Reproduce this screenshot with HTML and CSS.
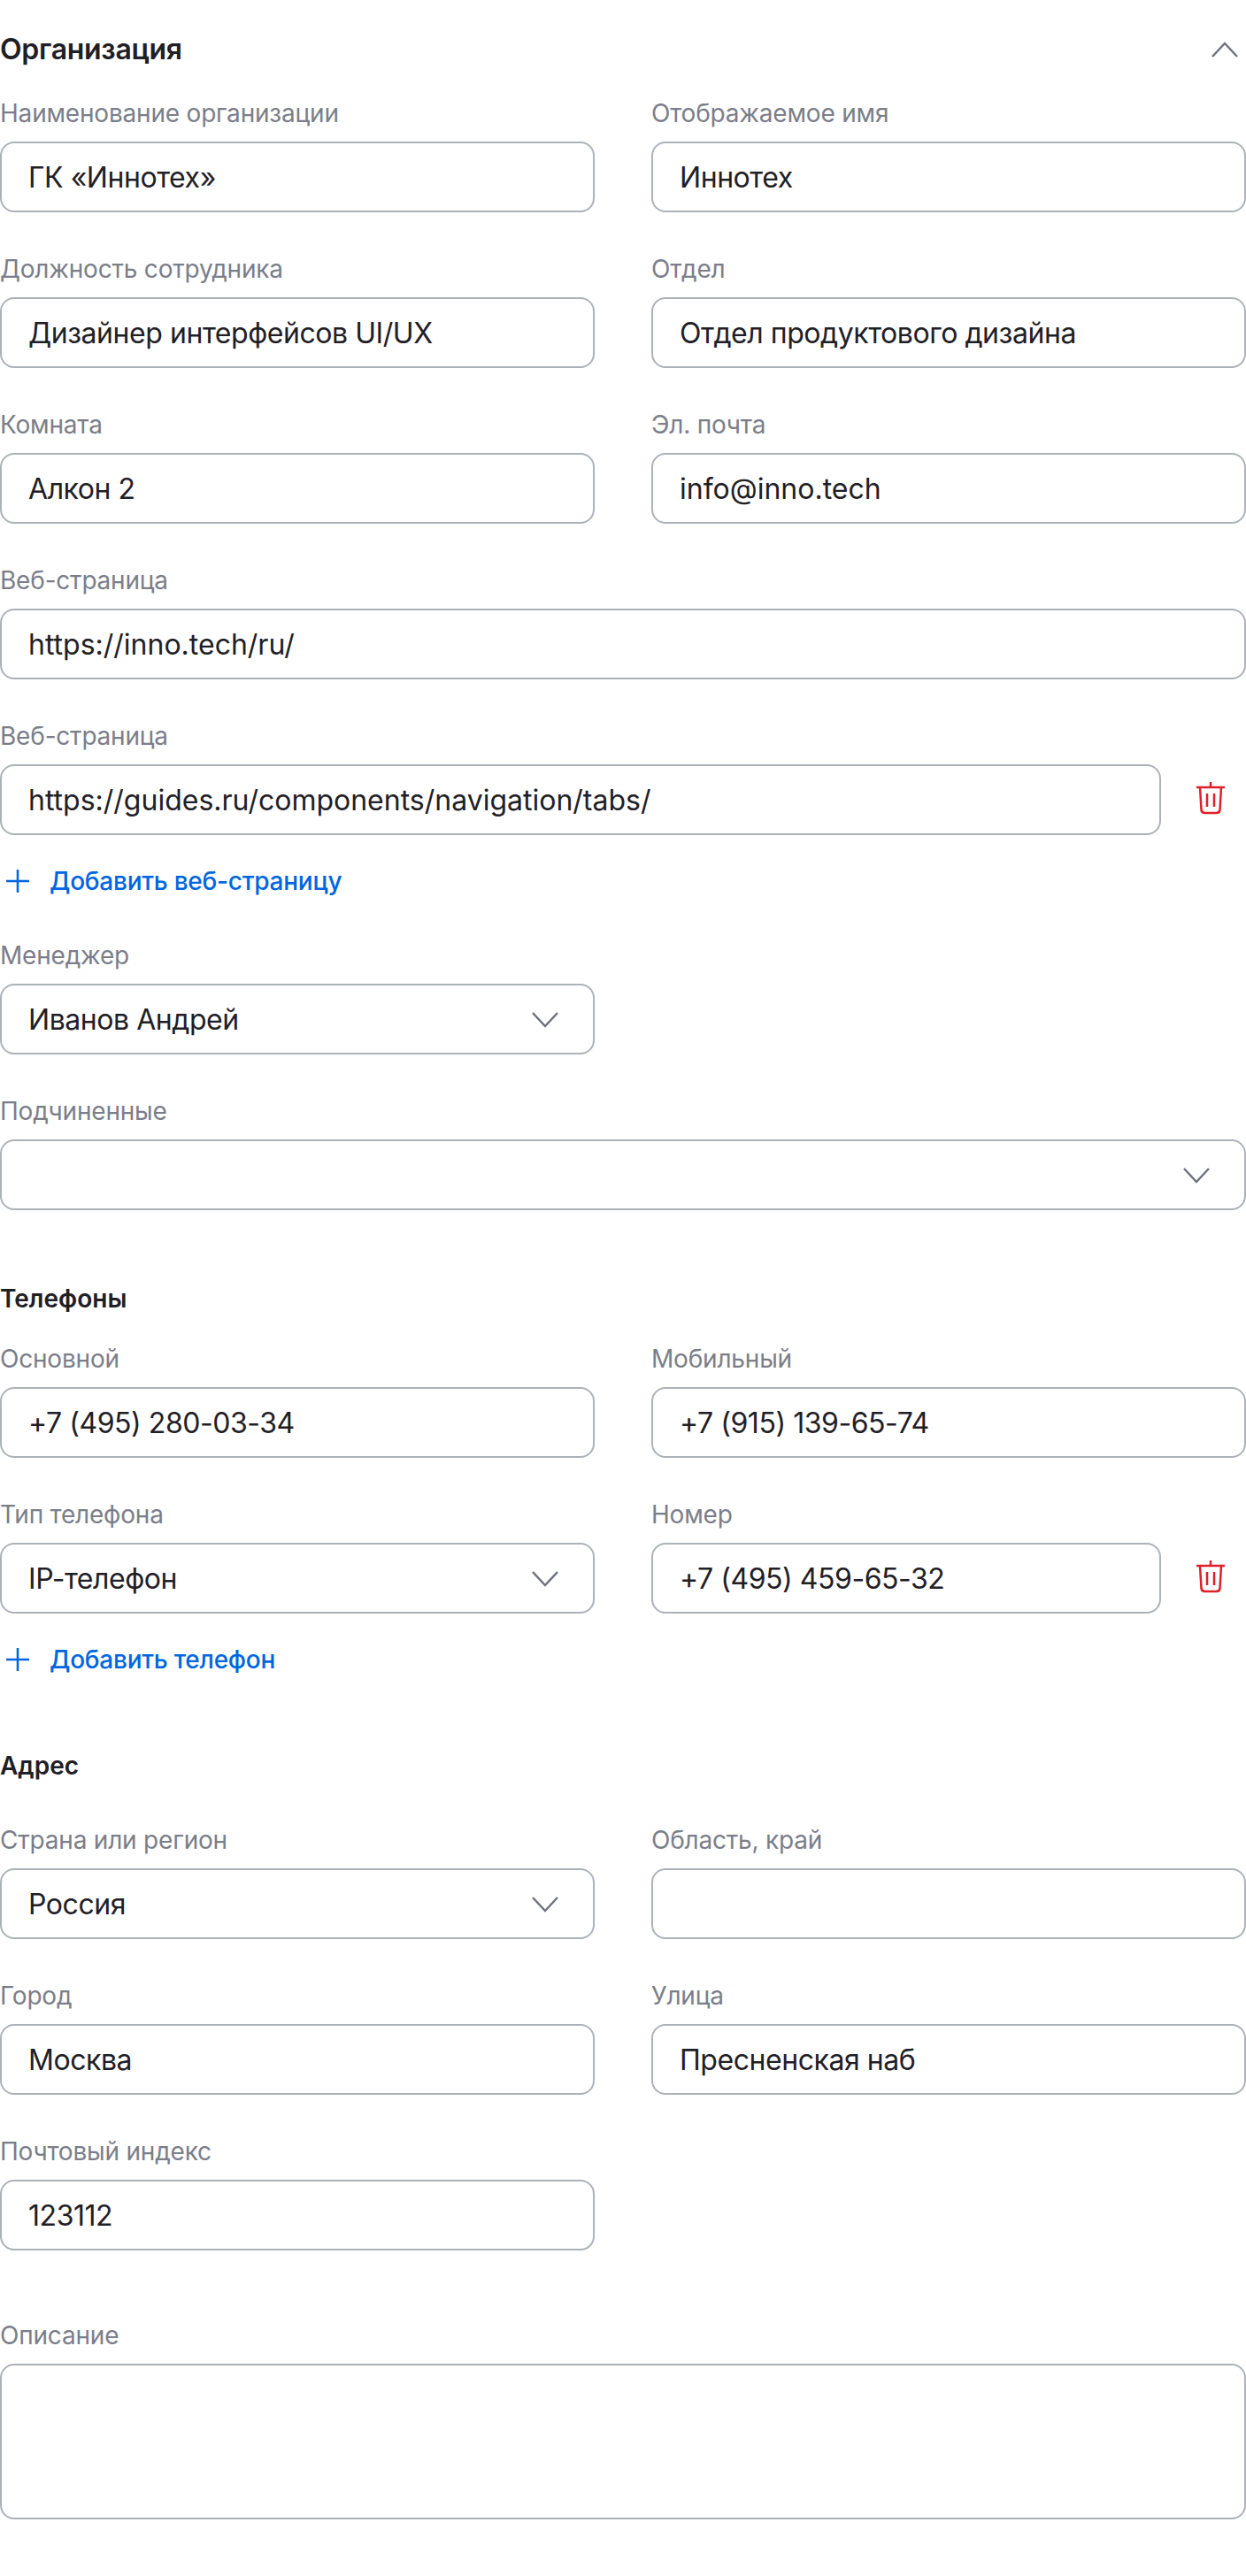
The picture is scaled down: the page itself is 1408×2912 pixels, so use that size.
FILE: index.html
```html
<!DOCTYPE html>
<html lang="ru">
<head>
  <meta charset="UTF-8" />
  <title>Организация</title>
  <link rel="stylesheet" href="styles.css">
</head>
<body>

  <div class="section-head">
    <h2>Организация</h2>
    <svg class="icon-toggle" viewBox="0 0 40 40"><path d="M6 28 20 13l14 15"/></svg>
  </div>

  <!-- Организация -->
  <div class="grid">
    <div class="field"><div class="label">Наименование организации</div><div class="box">ГК «Иннотех»</div></div>
    <div class="field"><div class="label">Отображаемое имя</div><div class="box">Иннотех</div></div>
    <div class="field"><div class="label">Должность сотрудника</div><div class="box">Дизайнер интерфейсов UI/UX</div></div>
    <div class="field"><div class="label">Отдел</div><div class="box">Отдел продуктового дизайна</div></div>
    <div class="field"><div class="label">Комната</div><div class="box">Алкон 2</div></div>
    <div class="field"><div class="label">Эл. почта</div><div class="box latin">info@inno.tech</div></div>
    <div class="field wide"><div class="label">Веб-страница</div><div class="box latin">https://inno.tech/ru/</div></div>
    <div class="field wide">
      <div class="label">Веб-страница</div>
      <div class="with-delete">
        <div class="box latin">https://guides.ru/components/navigation/tabs/</div>
        <div class="delete"><svg class="icon-trash" viewBox="0 0 40 40"><path d="M20 0v6M4 6h32M8 6l1.5 25.5a4 4 0 0 0 4 3.5h13a4 4 0 0 0 4-3.5L32 6M16 13v15M24 13v15"/></svg></div>
      </div>
    </div>
  </div>

  <div class="add-link">
    <svg class="icon-plus" viewBox="0 0 40 40"><path d="M20 7v26M7 20h26"/></svg>
    Добавить веб-страницу
  </div>

  <div class="grid">
    <div class="field">
      <div class="label">Менеджер</div>
      <div class="box select">Иванов Андрей<svg class="icon-chevron" viewBox="0 0 40 40"><path d="M6 13l14 15 14-15"/></svg></div>
    </div>
    <div class="field"></div>
    <div class="field wide">
      <div class="label">Подчиненные</div>
      <div class="box select"><svg class="icon-chevron" viewBox="0 0 40 40"><path d="M6 13l14 15 14-15"/></svg></div>
    </div>
  </div>

  <!-- Телефоны -->
  <h3 class="phones-title">Телефоны</h3>
  <div class="grid">
    <div class="field"><div class="label">Основной</div><div class="box">+7 (495) 280-03-34</div></div>
    <div class="field"><div class="label">Мобильный</div><div class="box">+7 (915) 139-65-74</div></div>
    <div class="field">
      <div class="label">Тип телефона</div>
      <div class="box select">IP-телефон<svg class="icon-chevron" viewBox="0 0 40 40"><path d="M6 13l14 15 14-15"/></svg></div>
    </div>
    <div class="field">
      <div class="label">Номер</div>
      <div class="with-delete">
        <div class="box">+7 (495) 459-65-32</div>
        <div class="delete"><svg class="icon-trash" viewBox="0 0 40 40"><path d="M20 0v6M4 6h32M8 6l1.5 25.5a4 4 0 0 0 4 3.5h13a4 4 0 0 0 4-3.5L32 6M16 13v15M24 13v15"/></svg></div>
      </div>
    </div>
  </div>

  <div class="add-link">
    <svg class="icon-plus" viewBox="0 0 40 40"><path d="M20 7v26M7 20h26"/></svg>
    Добавить телефон
  </div>

  <!-- Адрес -->
  <h3 class="address-title">Адрес</h3>
  <div class="grid">
    <div class="field">
      <div class="label">Страна или регион</div>
      <div class="box select">Россия<svg class="icon-chevron" viewBox="0 0 40 40"><path d="M6 13l14 15 14-15"/></svg></div>
    </div>
    <div class="field"><div class="label">Область, край</div><div class="box"></div></div>
    <div class="field"><div class="label">Город</div><div class="box">Москва</div></div>
    <div class="field"><div class="label">Улица</div><div class="box">Пресненская наб</div></div>
    <div class="field"><div class="label">Почтовый индекс</div><div class="box">123112</div></div>
  </div>

  <div class="field description">
    <div class="label">Описание</div>
    <div class="box textarea"></div>
  </div>

</body>
</html>
```

FILE: styles.css
```css
* {
  box-sizing: border-box;
}

html, body {
  margin: 0;
  padding: 0;
  background-color: #fff;
  font-family: Inter, "Noto Sans", sans-serif;
  color: #1f2026;
}

body {
  padding: 40px 0 64px;
}

.section-head {
  display: flex;
  justify-content: space-between;
  align-items: center;
  height: 32px;
  margin-bottom: 40px;
}

.section-head h2 {
  margin: 0;
  font-size: 32px;
  line-height: 32px;
  font-weight: 600;
  letter-spacing: -0.3px;
}

.icon-toggle {
  width: 40px;
  height: 40px;
  margin-right: 4px;
}

.icon-toggle path,
.icon-chevron path {
  fill: none;
  stroke: #6f727d;
  stroke-width: 2.5;
}

.grid {
  display: grid;
  grid-template-columns: 672px 672px;
  column-gap: 64px;
  row-gap: 48px;
}

.wide {
  grid-column: 1 / 3;
}

.label {
  height: 32px;
  margin-bottom: 16px;
  font-size: 28px;
  line-height: 32px;
  letter-spacing: -0.2px;
  color: #7b7e89;
}

.box {
  display: flex;
  align-items: center;
  justify-content: space-between;
  flex: 1;
  height: 80px;
  padding: 0 30px;
  border: 2px solid #adb1b8;
  border-radius: 16px;
  font-size: 32px;
  letter-spacing: -0.45px;
}

.box.latin {
  letter-spacing: 0;
}

.select {
  padding-right: 34px;
}

.select .icon-chevron {
  margin-left: auto;
}

.icon-chevron {
  width: 40px;
  height: 40px;
}

.textarea {
  height: 176px;
}

.with-delete {
  display: flex;
}

.delete {
  flex: 0 0 96px;
  display: flex;
  align-items: center;
  justify-content: center;
  padding-left: 16px;
}

.icon-trash {
  width: 40px;
  height: 40px;
}

.icon-trash path {
  fill: none;
  stroke: #e0202a;
  stroke-width: 2.5;
}

.add-link {
  display: flex;
  align-items: center;
  gap: 16px;
  height: 40px;
  margin-top: 32px;
  margin-bottom: 48px;
  font-size: 28px;
  font-weight: 500;
  letter-spacing: -0.25px;
  color: #0066e0;
}

.icon-plus {
  width: 40px;
  height: 40px;
}

.icon-plus path {
  fill: none;
  stroke: #0066e0;
  stroke-width: 2.5;
}

h3 {
  margin: 0;
  font-size: 28px;
  line-height: 32px;
  font-weight: 600;
}

.phones-title {
  margin-top: 84px;
  margin-bottom: 36px;
}

.address-title {
  margin-top: 84px;
  margin-bottom: 52px;
}

.description {
  margin-top: 80px;
}
```
